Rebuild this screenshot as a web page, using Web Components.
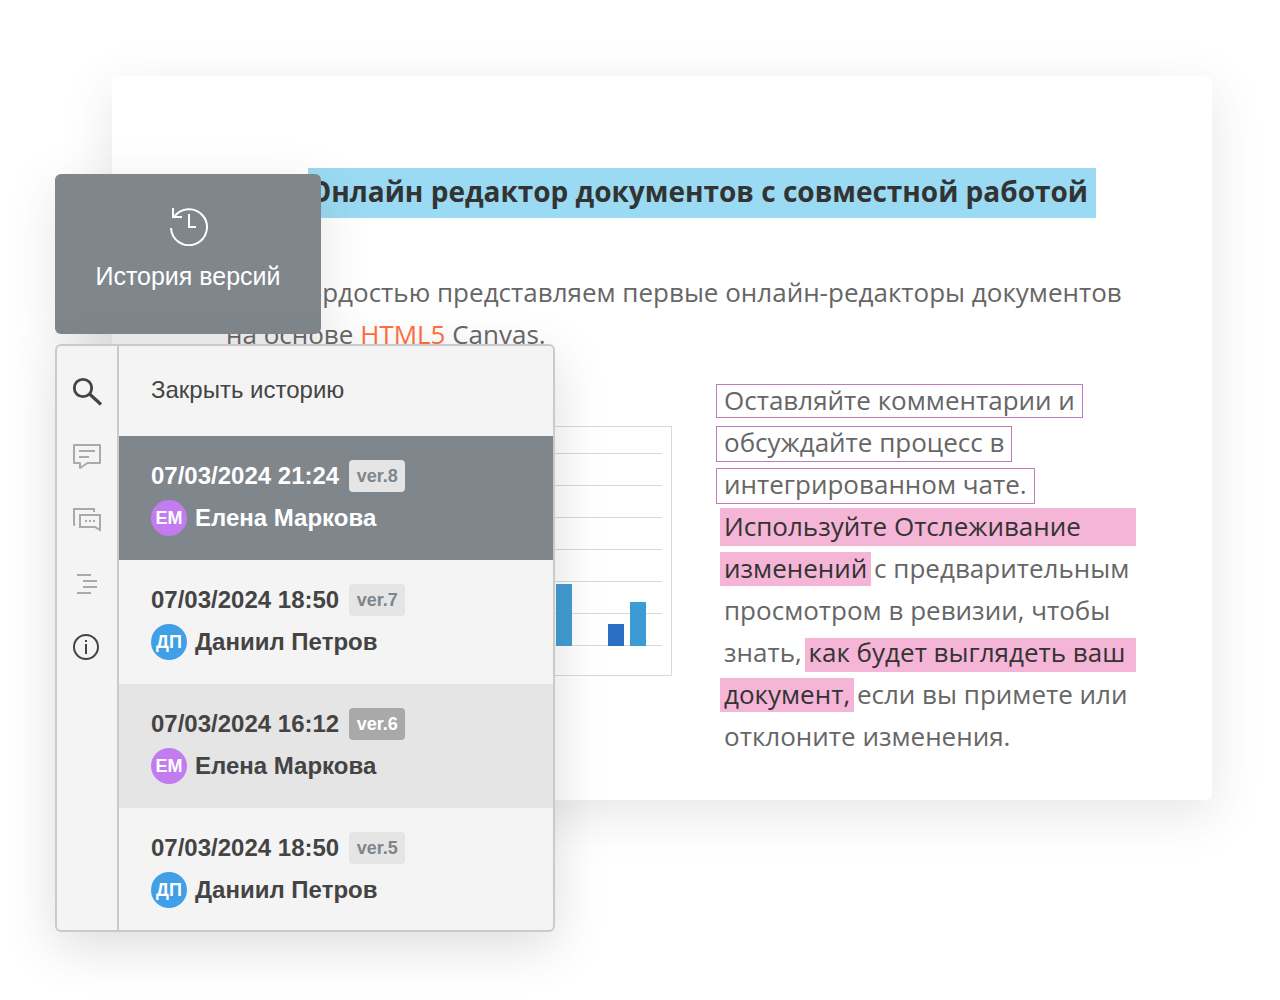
<!DOCTYPE html>
<html lang="ru">
<head>
<meta charset="utf-8">
<meta name="viewport" content="width=device-width, initial-scale=1">
<title>История версий</title>
<style>
  body { margin: 0; background: #fff; }
</style>
</head>
<body>
<editor-scene>
  <doc-sheet>
    <doc-title slot="title">Онлайн редактор документов с совместной работой</doc-title>
    <doc-intro slot="intro">Мы с гордостью представляем первые онлайн-редакторы документов на основе <a href="#html5">HTML5</a> Canvas.</doc-intro>
    <bar-chart slot="figure"></bar-chart>
    <doc-review slot="review"></doc-review>
  </doc-sheet>
  <history-badge slot="overlay">История версий</history-badge>
  <history-panel slot="overlay">
    <tool-rail slot="rail"></tool-rail>
    <version-item selected date="07/03/2024 21:24" version="ver.8" initials="ЕМ" color="#c27cf0">Елена Маркова</version-item>
    <version-item date="07/03/2024 18:50" version="ver.7" initials="ДП" color="#419fe8">Даниил Петров</version-item>
    <version-item hovered date="07/03/2024 16:12" version="ver.6" initials="ЕМ" color="#c27cf0">Елена Маркова</version-item>
    <version-item date="07/03/2024 18:50" version="ver.5" initials="ДП" color="#419fe8">Даниил Петров</version-item>
  </history-panel>
</editor-scene>

<script>
const define = (name, html, setup) => customElements.define(name, class extends HTMLElement {
  constructor() {
    super();
    this.attachShadow({ mode: 'open' }).innerHTML = html;
  }
  connectedCallback() {
    if (setup) setup(this, this.shadowRoot);
  }
});

define('editor-scene', `
  <style>
    :host { display: block; position: relative; box-sizing: border-box; min-height: 100vh; padding: 76px 68px 68px 112px; }
    .overlay { position: absolute; left: 55px; top: 174px; display: flex; flex-direction: column; align-items: flex-start; gap: 10px; }
  </style>
  <slot></slot>
  <div class="overlay"><slot name="overlay"></slot></div>`);

define('doc-sheet', `
  <style>
    :host { display: block; }
    article { display: flex; flex-direction: column; padding: 92px 76px 42px 114px; border-radius: 6px; background: #fff; box-shadow: 0 14px 50px rgba(85, 85, 85, .15); font-family: "Open Sans", "Noto Sans", sans-serif; color: #666; }
    .title { display: flex; justify-content: flex-end; padding: 0 40px 53px 0; }
    .columns { display: grid; grid-template-columns: 444px minmax(0, 1fr); gap: 44px; padding: 25px 0 0 2px; }
  </style>
  <article>
    <div class="title"><slot name="title"></slot></div>
    <slot name="intro"></slot>
    <div class="columns"><slot name="figure"></slot><slot name="review"></slot></div>
  </article>`);

define('doc-title', `
  <style>
    :host { display: block; }
    h1 { margin: 0; padding: 0 8px 4px 1px; background: #9adaf3; color: #333; font-size: 28px; line-height: 46px; font-weight: 700; white-space: nowrap; }
  </style>
  <h1><slot></slot></h1>`);

define('doc-intro', `
  <style>
    :host { display: block; }
    p { margin: 0; font-size: 26px; line-height: 42px; }
    ::slotted(a) { color: #ff6f3d; text-decoration: none; }
  </style>
  <p><slot></slot></p>`);

define('bar-chart', `
  <style>
    :host { display: block; padding-top: 46px; }
    svg { display: block; box-sizing: border-box; width: 444px; height: 250px; border: 1px solid #d9d9d9; }
  </style>
  <svg viewBox="0 0 442 248" role="img" aria-label="Диаграмма">
    <path d="M9 26.5H433M9 58.5H433M9 90.5H433M9 122.5H433M9 154.5H433M9 186.5H433M9 218.5H433" stroke="#d9d9d9" fill="none"/>
    <path d="M45 139h16v80H45zM147 119h16v100h-16zM249 99h16v120h-16z" fill="#2b6dc0"/>
    <path d="M67 109h16v110H67zM169 89h16v130h-16zM327 157h16v62h-16zM401 175h16v44h-16z" fill="#3d9bd3"/>
    <path d="M379 197h16v22h-16z" fill="#2b6dc0"/>
  </svg>`);

define('doc-review', `
  <style>
    :host { display: block; font-size: 26px; line-height: 32px; }
    p { margin: 0; padding: 0 0 0 8px; }
    .line { display: flex; align-items: flex-start; box-sizing: border-box; height: 42px; padding-top: 4px; white-space: pre; }
    .note { box-sizing: border-box; height: 36px; line-height: 30px; margin-left: -8px; padding: 0 7px; border: 1px solid #bf7cb8; }
    .note.first { height: 34px; }
    mark { display: block; height: 34px; margin: 0 -4px; padding: 0 4px; background: #f5b5d6; color: #333; }
    .wide { flex: 1; margin-right: 0; }
    .tall { height: 38px; line-height: 36px; margin-top: -2px; }
    .low { line-height: 28px; margin-top: 2px; }
  </style>
  <p>
    <span class="line"><span class="note first">Оставляйте комментарии и</span></span>
    <span class="line"><span class="note">обсуждайте процесс в</span></span>
    <span class="line"><span class="note">интегрированном чате.</span></span>
    <span class="line"><mark class="wide tall">Используйте Отслеживание</mark></span>
    <span class="line"><mark>изменений</mark><span> с предварительным</span></span>
    <span class="line"><span>просмотром в ревизии, чтобы</span></span>
    <span class="line"><span>знать, </span><mark class="wide low">как будет выглядеть ваш</mark></span>
    <span class="line"><mark>документ,</mark><span> если вы примете или</span></span>
    <span class="line"><span>отклоните изменения.</span></span>
  </p>`);

define('history-badge', `
  <style>
    :host { display: block; }
    button { display: flex; flex-direction: column; align-items: center; gap: 16px; box-sizing: border-box; width: 266px; padding: 32px 24px 44px; border: 0; border-radius: 6px; background: #7f868c; color: #fff; font: 25px/28px "Liberation Sans", Arial, sans-serif; white-space: nowrap; box-shadow: 0 14px 50px rgba(85, 85, 85, .15); cursor: pointer; }
    svg { display: block; }
  </style>
  <button type="button">
    <svg width="42" height="40" viewBox="0 0 42 40" fill="none" stroke="#fff" stroke-width="2" aria-hidden="true">
      <path d="M4 22A18 18 0 1 0 6.5 12M6 2V11H15M22 8V21H29"/>
    </svg>
    <span><slot></slot></span>
  </button>`);

define('history-panel', `
  <style>
    :host { display: block; }
    section { display: flex; box-sizing: border-box; width: 500px; border: 2px solid #cacaca; border-radius: 6px; overflow: hidden; background: #f4f4f4; color: #444; font-family: "Liberation Sans", Arial, sans-serif; box-shadow: 0 14px 50px rgba(85, 85, 85, .2); }
    .rail { width: 60px; border-right: 2px solid #cacaca; }
    .list { flex: 1; display: flex; flex-direction: column; margin-bottom: -2px; }
    .close { padding: 0 32px 2px; border: 0; background: none; color: inherit; font: 24px/88px "Liberation Sans", Arial, sans-serif; text-align: left; cursor: pointer; }
  </style>
  <section aria-label="История версий">
    <div class="rail"><slot name="rail"></slot></div>
    <div class="list">
      <button class="close" type="button">Закрыть историю</button>
      <slot></slot>
    </div>
  </section>`);

define('tool-rail', `
  <style>
    :host { display: block; }
    nav { display: flex; flex-direction: column; align-items: center; gap: 32px; padding-top: 30px; }
    button { display: block; padding: 0; border: 0; background: none; color: #aaa; cursor: pointer; }
    .dark { color: #444; }
    svg { display: block; fill: none; stroke: currentColor; stroke-width: 2; }
  </style>
  <nav aria-label="Инструменты">
    <button class="dark" type="button" aria-label="Поиск"><svg width="32" height="32"><circle cx="12" cy="12" r="8.7" stroke-width="2.8"/><path d="M18 17.500L30 28.500" stroke-width="3.2"/></svg></button>
    <button type="button" aria-label="Комментарии"><svg width="32" height="32"><path d="M3 5H29V23H16.500L9 28V23H3ZM8 11H24M8 17H18" stroke-linejoin="round"/></svg></button>
    <button type="button" aria-label="Чат"><svg width="32" height="32"><path d="M3 21V5H23V8M2.500 21.500L4 20M9 11H29V26L24 23H9Z"/><path d="M14 17H16M18 17H20M22 17H24"/></svg></button>
    <button type="button" aria-label="Заголовки"><svg width="32" height="32"><path d="M6 7H20M12 13H26M12 19H26M6 25H20"/></svg></button>
    <button class="dark" type="button" aria-label="О документе"><svg width="32" height="32"><circle cx="15" cy="15" r="12"/><path d="M15 8V10M15 12V22"/></svg></button>
  </nav>`);

define('version-item', `
  <style>
    :host { display: block; --tag-bg: #e5e5e5; --tag-ink: #7f868c; }
    :host([selected]) { background: #7f868c; color: #fff; }
    :host([hovered]) { background: #e5e5e5; --tag-bg: #a9a9a9; --tag-ink: #fff; }
    button { display: flex; flex-direction: column; gap: 8px; width: 100%; padding: 24px 32px; border: 0; background: none; color: inherit; font: bold 24px/32px "Liberation Sans", Arial, sans-serif; text-align: left; cursor: pointer; }
    .row { display: flex; align-items: center; gap: 10px; }
    .author { gap: 8px; }
    .tag { box-sizing: border-box; width: 56px; border-radius: 4px; background: var(--tag-bg); color: var(--tag-ink); font-size: 18px; text-align: center; }
    .avatar { width: 36px; border-radius: 50%; color: #fff; font-size: 18px; line-height: 36px; text-align: center; }
  </style>
  <button type="button">
    <span class="row"><span class="date"></span><span class="tag"></span></span>
    <span class="row author"><span class="avatar"></span><span><slot></slot></span></span>
  </button>`, (host, root) => {
    root.querySelector('.date').textContent = host.getAttribute('date');
    root.querySelector('.tag').textContent = host.getAttribute('version');
    const avatar = root.querySelector('.avatar');
    avatar.textContent = host.getAttribute('initials');
    avatar.style.background = host.getAttribute('color');
  });
</script>
</body>
</html>
